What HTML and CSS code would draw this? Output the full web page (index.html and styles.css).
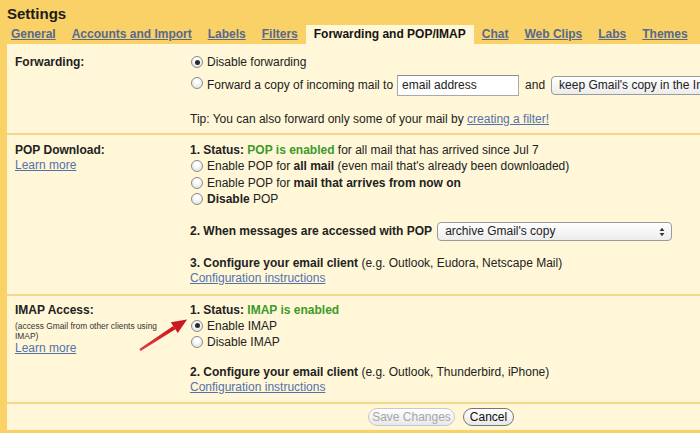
FILE: index.html
```html
<!DOCTYPE html>
<html>
<head>
<meta charset="utf-8">
<title>Settings</title>
<link rel="stylesheet" href="styles.css">
</head>
<body>
<div class="header">
  <div class="title">Settings</div>
  <nav class="tabs">
    <a class="tab">General</a>
    <a class="tab">Accounts and Import</a>
    <a class="tab">Labels</a>
    <a class="tab">Filters</a>
    <span class="tab active">Forwarding and POP/IMAP</span>
    <a class="tab">Chat</a>
    <a class="tab">Web Clips</a>
    <a class="tab">Labs</a>
    <a class="tab">Themes</a>
  </nav>
</div>
<div class="content">
  <section class="sec fwd">
    <div class="label"><div class="lbl">Forwarding:</div></div>
    <div class="body">
      <div class="opt"><span class="radio on"></span>Disable forwarding</div>
      <div class="fwdrow"><span class="radio up"></span><span>Forward a copy of incoming mail to</span><span class="input">email address</span><span class="and">and</span><span class="popup wide">keep Gmail's copy in the Inbox</span></div>
      <div class="tip">Tip: You can also forward only some of your mail by <a class="link">creating a filter!</a></div>
    </div>
  </section>

  <section class="sec pop">
    <div class="label">
      <div class="lbl">POP Download:</div>
      <a class="link learn">Learn more</a>
    </div>
    <div class="body">
      <div class="status"><b>1. Status: <span class="green">POP is enabled</span></b> for all mail that has arrived since Jul 7</div>
      <div class="opts">
        <div class="opt"><span class="radio"></span>Enable POP for <b>all mail</b> (even mail that's already been downloaded)</div>
        <div class="opt"><span class="radio"></span>Enable POP for <b>mail that arrives from now on</b></div>
        <div class="opt"><span class="radio"></span><b>Disable</b> POP</div>
      </div>
      <div class="whenrow"><b>2. When messages are accessed with POP</b><span class="popup mid">archive Gmail's copy<svg class="updown" width="6" height="10" viewBox="0 0 6 10"><path d="M0.6 4 L3 0.8 L5.4 4 Z M0.6 6 L3 9.2 L5.4 6 Z" fill="#333"/></svg></span></div>
      <div class="step"><b>3. Configure your email client</b> (e.g. Outlook, Eudora, Netscape Mail)</div>
      <a class="link cfg">Configuration instructions</a>
    </div>
  </section>

  <section class="sec imap">
    <div class="label">
      <div class="lbl">IMAP Access:</div>
      <div class="small">(access Gmail from other clients using<br>IMAP)</div>
      <a class="link learn2">Learn more</a>
    </div>
    <div class="body">
      <div class="status"><b>1. Status: <span class="green">IMAP is enabled</span></b></div>
      <div class="opt"><span class="radio on"></span>Enable IMAP</div>
      <div class="opt"><span class="radio"></span>Disable IMAP</div>
      <div class="step step2"><b>2. Configure your email client</b> (e.g. Outlook, Thunderbird, iPhone)</div>
      <a class="link cfg">Configuration instructions</a>
    </div>
    <svg class="arrow" width="62" height="44" viewBox="0 0 62 44">
      <defs>
        <linearGradient id="ag" x1="0" y1="1" x2="1" y2="0">
          <stop offset="0" stop-color="#e04040"/>
          <stop offset="1" stop-color="#c8141c"/>
        </linearGradient>
      </defs>
      <polygon points="10.6,38.9 9.4,37.1 43.2,13.9 45.4,17.3" fill="url(#ag)"/>
      <polygon points="57,7.5 47.8,21 40.8,10.3" fill="#c91820"/>
    </svg>
  </section>

  <div class="actions">
    <span class="btn save">Save Changes</span>
    <span class="btn cancel">Cancel</span>
  </div>
</div>
</body>
</html>
```
FILE: styles.css
```css
body {
  margin: 0;
  width: 700px;
  height: 433px;
  overflow: hidden;
  background: #f9d166;
  font-family: "Liberation Sans", Arial, Helvetica, sans-serif;
  font-size: 12px;
  color: #222;
}

.header {
  height: 44px;
  display: flex;
  flex-direction: column;
}

.title {
  font-size: 15px;
  font-weight: bold;
  line-height: 18px;
  padding: 5px 0 0 7px;
  color: #1c1c1c;
}

.tabs {
  display: flex;
  margin-top: auto;
  padding-left: 3px;
  height: 19px;
}

.tab {
  padding: 0 8px;
  line-height: 19px;
  font-weight: bold;
  color: #56698e;
  text-decoration: underline;
  white-space: nowrap;
}

.tab.active {
  background: #fff7d7;
  color: #151515;
  text-decoration: none;
}

.content {
  margin-left: 7px;
  height: 386px;
  background: #fff7d7;
  white-space: nowrap;
}

.sec {
  display: grid;
  grid-template-columns: 175px 1fr;
  padding-left: 8px;
  border-bottom: 2px solid #f3d78a;
}

.lbl {
  font-weight: bold;
  line-height: 16px;
}

.link {
  display: block;
  color: #5472aa;
  text-decoration: underline;
}

.tip .link {
  display: inline;
}

.green {
  color: #3c9a2c;
}

.opt {
  line-height: 16px;
  height: 16px;
}

.radio {
  display: inline-block;
  box-sizing: border-box;
  width: 12px;
  height: 12px;
  border-radius: 50%;
  border: 1px solid #8b8b8b;
  background: radial-gradient(circle at 50% 35%, #ffffff 20%, #d9d9d9 100%);
  margin: 0 4px 0 1px;
  position: relative;
  vertical-align: -2px;
}

.radio.on::after {
  content: "";
  position: absolute;
  left: 2.5px;
  top: 2.5px;
  width: 5px;
  height: 5px;
  border-radius: 50%;
  background: #2a2a2a;
}

.radio.up {
  align-self: center;
  margin-top: -5px;
}

/* Forwarding */
.fwd {
  padding-top: 10px;
  padding-bottom: 6px;
}

.fwdrow {
  display: flex;
  align-items: center;
  margin-top: 4px;
  height: 22px;
}

.input {
  display: inline-block;
  box-sizing: border-box;
  width: 122px;
  height: 21px;
  margin-left: 4px;
  padding-left: 4px;
  line-height: 19px;
  background: #fff;
  border: 1px solid #a9a9a9;
  border-top-color: #8c8c8c;
}

.and {
  margin: 0 6px 0 6px;
}

.popup {
  display: inline-flex;
  align-items: center;
  box-sizing: border-box;
  height: 19px;
  padding-left: 7px;
  border: 1px solid #9a9a9a;
  border-radius: 4px;
  background: linear-gradient(#ffffff, #ececec);
  color: #222;
  position: relative;
}

.popup.wide {
  width: 240px;
}

.popup.mid {
  width: 235px;
  margin-left: 5px;
}

.updown {
  position: absolute;
  right: 6px;
  top: 4px;
}

.tip {
  margin-top: 15px;
  line-height: 16px;
}

/* POP */
.pop {
  padding-top: 7px;
  padding-bottom: 8px;
}

.status {
  line-height: 16px;
}

.opts .opt {
  height: 16.5px;
  line-height: 16.5px;
}

.learn {
  line-height: 14px;
}

.whenrow {
  display: flex;
  align-items: center;
  height: 19px;
  margin-top: 14px;
}

.step {
  margin-top: 15px;
  line-height: 15px;
}

.cfg {
  line-height: 15px;
}

/* IMAP */
.imap {
  position: relative;
  padding-top: 6px;
  padding-bottom: 7px;
}

.small {
  font-size: 8.4px;
  line-height: 10px;
  margin-top: 3px;
  color: #333;
}

.learn2 {
  line-height: 14px;
}

.step2 {
  margin-top: 15px;
}

.arrow {
  position: absolute;
  left: 123px;
  top: 16px;
}

/* Buttons */
.actions {
  display: flex;
  gap: 8px;
  padding: 4px 0 0 361px;
}

.btn {
  display: inline-block;
  box-sizing: border-box;
  height: 18px;
  line-height: 16px;
  border-radius: 9px;
  text-align: center;
  background: linear-gradient(#ffffff, #e8e8e8);
  font-size: 12px;
}

.save {
  width: 87px;
  border: 1px solid #c9c9c9;
  color: #a6a6a6;
}

.cancel {
  width: 51px;
  border: 1px solid #767676;
  color: #111;
}
```
